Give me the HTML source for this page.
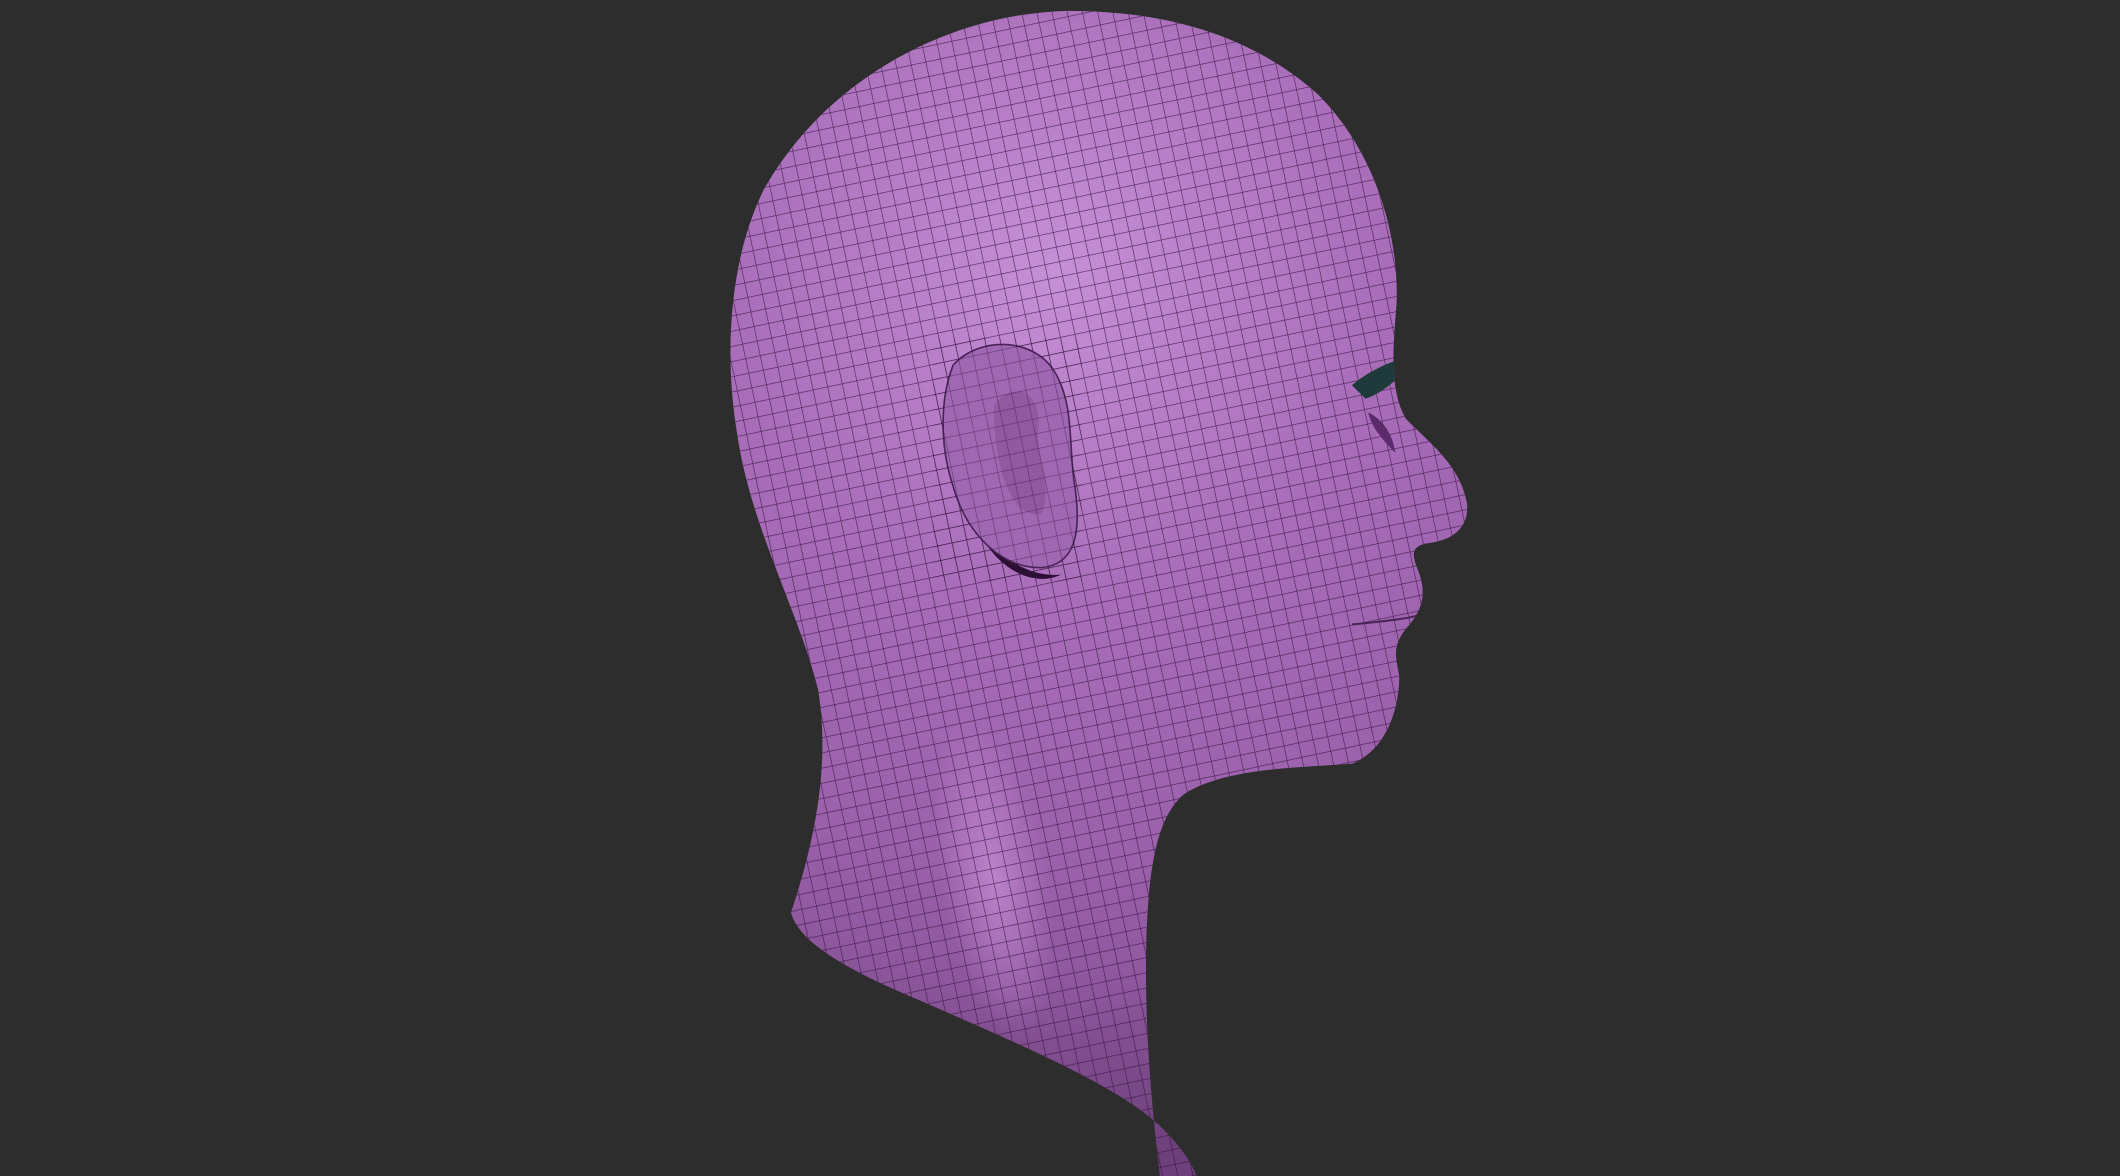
<!DOCTYPE html>
<html><head><meta charset="utf-8"><style>
html,body{margin:0;padding:0;background:#2d2d2d;width:2120px;height:1176px;overflow:hidden}
svg{display:block}
</style></head><body>
<svg width="2120" height="1176" viewBox="0 0 1568 870" xmlns="http://www.w3.org/2000/svg">
<defs>
<radialGradient id="g" cx="780" cy="200" r="560" gradientUnits="userSpaceOnUse">
<stop offset="0" stop-color="#c690d6"/>
<stop offset="0.45" stop-color="#a86cb8"/>
<stop offset="0.8" stop-color="#9a60aa"/>
<stop offset="1" stop-color="#8a5499"/>
</radialGradient>
<radialGradient id="g2" cx="0" cy="0" r="1" gradientUnits="userSpaceOnUse" gradientTransform="translate(735 650) rotate(80) scale(120 40)">
<stop offset="0" stop-color="#d29ae0" stop-opacity="0.6"/>
<stop offset="1" stop-color="#d29ae0" stop-opacity="0"/>
</radialGradient>
<radialGradient id="sh" cx="790" cy="380" r="480" gradientUnits="userSpaceOnUse">
<stop offset="0.75" stop-color="#2a0f35" stop-opacity="0"/>
<stop offset="1" stop-color="#2a0f35" stop-opacity="0.3"/>
</radialGradient>
<pattern id="grid" width="11" height="11" patternUnits="userSpaceOnUse" patternTransform="rotate(-12)">
<path d="M11 0H0V11" fill="none" stroke="#2e1038" stroke-width="0.9" stroke-opacity="0.8"/>
</pattern>
<clipPath id="c"><path id="head" d="M790 8 C700 10 610 60 565 140 C540 190 535 260 545 320 C555 390 590 450 605 510 C615 570 600 630 585 675 C590 695 620 715 680 740 C760 775 830 805 860 835 C875 850 882 862 885 870 L858 870 C852 820 846 760 848 690 C850 640 856 605 875 588 C905 568 960 568 1000 565 C1025 555 1035 525 1035 500 C1032 485 1030 478 1040 465 C1052 452 1055 440 1050 425 C1045 412 1042 405 1055 402 C1075 400 1087 390 1085 372 C1080 345 1060 330 1040 310 C1028 290 1030 260 1033 225 C1035 170 1015 110 975 70 C925 25 860 8 790 8 Z"/></clipPath>
</defs>
<rect width="1568" height="870" fill="#2d2d2d"/>
<use href="#head" fill="url(#g)"/>
<g clip-path="url(#c)">
<rect x="400" y="0" width="800" height="870" fill="url(#sh)"/>
<rect x="500" y="400" width="500" height="470" fill="url(#g2)"/>
<rect x="400" y="0" width="800" height="870" fill="url(#grid)"/>
<!-- ear -->
<path d="M720 385 C735 410 760 428 785 425 C765 435 735 422 720 385Z" fill="#2b0f35"/>
<path d="M705 270 C725 248 765 250 780 275 C795 300 790 330 795 360 C800 395 795 418 770 420 C740 420 715 395 705 360 C695 330 695 295 705 270 Z" fill="#a068b2" stroke="#4a2258" stroke-width="1.2"/>
<path d="M735 300 C750 280 770 290 768 315 C765 340 780 360 770 380 C750 385 735 350 735 300Z" fill="#8a5299" opacity="0.7"/>
<rect x="690" y="250" width="110" height="180" fill="url(#grid)" opacity="0.7"/>
<path d="M1000 285 C1015 272 1035 265 1050 262 C1040 275 1025 290 1010 295Z" fill="#1e3a3a"/>
<path d="M1012 305 C1022 310 1030 320 1032 335 C1022 325 1014 315 1012 305Z" fill="#5a2a6a"/>
<path d="M1000 462 C1020 460 1040 458 1050 455" stroke="#4a2456" stroke-width="1.5" fill="none"/>
</g>
</svg>
</body></html>
